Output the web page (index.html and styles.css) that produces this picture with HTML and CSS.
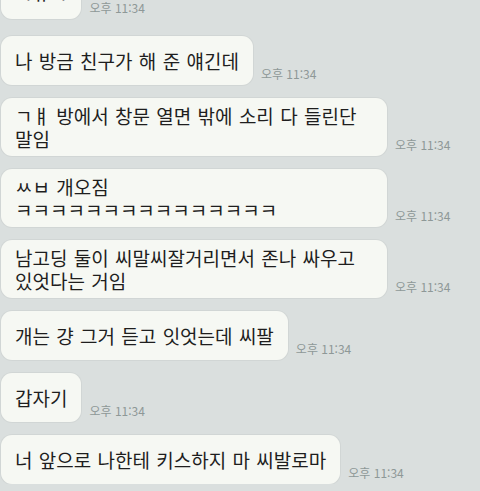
FILE: index.html
```html
<!DOCTYPE html>
<html lang="ko">
<head>
    <meta charset="UTF-8">
    <meta name="viewport" content="width=device-width, initial-scale=1.0">
    <title>채팅</title>
    <link rel="stylesheet" href="styles.css">
</head>
<body>
    <div class="chat">
        <div class="msg">
            <div class="bubble">ㅋㅠㅋ</div>
            <span class="time">오후 11:34</span>
        </div>
        <div class="msg">
            <div class="bubble">나 방금 친구가 해 준 얘긴데</div>
            <span class="time">오후 11:34</span>
        </div>
        <div class="msg">
            <div class="bubble">ㄱㅒ 방에서 창문 열면 밖에 소리 다 들린단 말임</div>
            <span class="time">오후 11:34</span>
        </div>
        <div class="msg">
            <div class="bubble">ㅆㅂ 개오짐 ㅋㅋㅋㅋㅋㅋㅋㅋㅋㅋㅋㅋㅋㅋㅋ</div>
            <span class="time">오후 11:34</span>
        </div>
        <div class="msg">
            <div class="bubble">남고딩 둘이 씨말씨잘거리면서 존나 싸우고 있엇다는 거임</div>
            <span class="time">오후 11:34</span>
        </div>
        <div class="msg">
            <div class="bubble">개는 걍 그거 듣고 잇엇는데 씨팔</div>
            <span class="time">오후 11:34</span>
        </div>
        <div class="msg">
            <div class="bubble">갑자기</div>
            <span class="time">오후 11:34</span>
        </div>
        <div class="msg">
            <div class="bubble">너 앞으로 나한테 키스하지 마 씨발로마</div>
            <span class="time">오후 11:34</span>
        </div>
    </div>
</body>
</html>
```

FILE: styles.css
```css
body {
    margin: 0;
    background-color: #dadfde;
    font-family: "Noto Sans CJK KR", "Noto Sans", sans-serif;
    overflow: hidden;
}
.chat {
    display: flex;
    flex-direction: column;
    gap: 13px;
    margin-top: -30px;
    padding-left: 1px;
}
.msg {
    display: flex;
    align-items: flex-end;
    gap: 8px;
}
/* the first message is only partly scrolled into view */
.msg:first-child {
    margin-bottom: 4px;
}
.bubble {
    box-sizing: border-box;
    max-width: 386px;
    min-height: 49px;
    display: flex;
    align-items: center;
    padding: 6px 14px;
    background-color: #f6f8f3;
    border-radius: 11px;
    box-shadow: 0 0 0 1px rgba(0,0,0,0.04);
    color: #1e1e1e;
    font-size: 19px;
    line-height: 23px;
    word-spacing: 1px;
    word-break: keep-all;
}
.time {
    margin-bottom: 4px;
    color: #8e9897;
    font-size: 12px;
    line-height: 14px;
    white-space: nowrap;
}
```
